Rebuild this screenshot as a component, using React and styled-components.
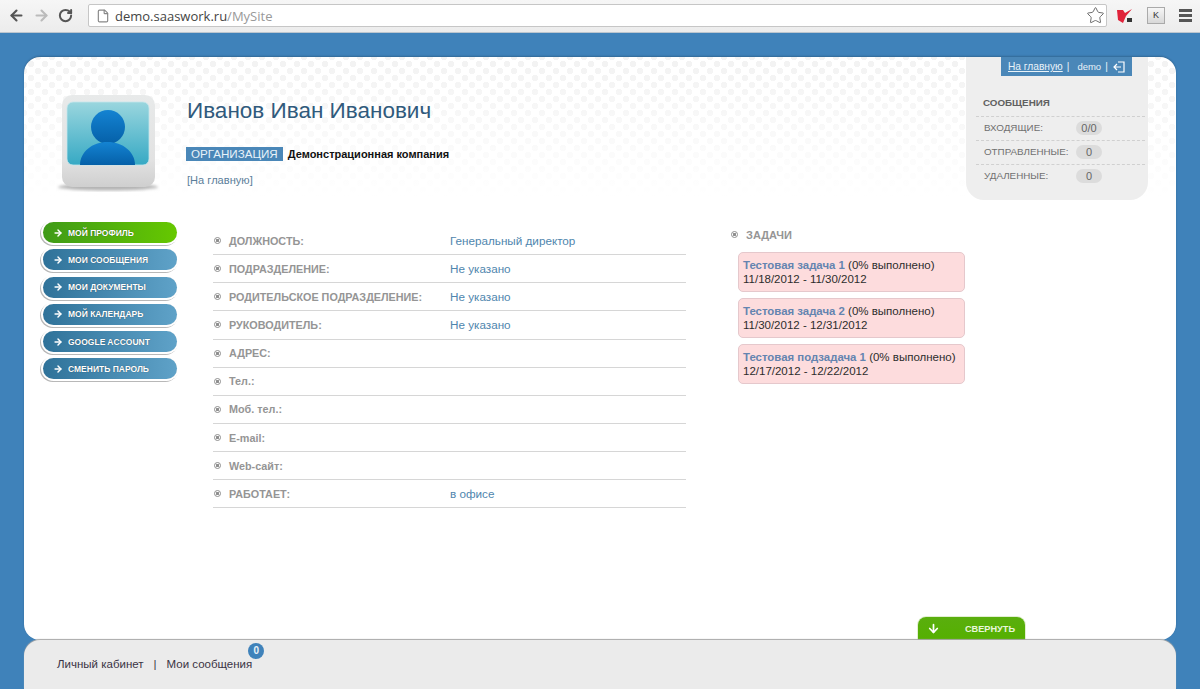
import React from 'react';
import styled, { createGlobalStyle } from 'styled-components';
import { ArrowLeft, ArrowRight, ArrowDown, RotateCw, File, Star } from 'lucide-react';

const menu = ['Мой профиль', 'Мои сообщения', 'Мои документы', 'Мой календарь', 'Google account', 'Сменить пароль'];

const fields = [
  { label: 'Должность:', value: 'Генеральный директор', upper: true },
  { label: 'Подразделение:', value: 'Не указано', upper: true },
  { label: 'Родительское подразделение:', value: 'Не указано', upper: true },
  { label: 'Руководитель:', value: 'Не указано', upper: true },
  { label: 'Адрес:', upper: true },
  { label: 'Тел.:' },
  { label: 'Моб. тел.:' },
  { label: 'E-mail:' },
  { label: 'Web-сайт:' },
  { label: 'Работает:', value: 'в офисе', upper: true },
];

const tasks = [
  { name: 'Тестовая задача 1', dates: '11/18/2012 - 11/30/2012' },
  { name: 'Тестовая задача 2', dates: '11/30/2012 - 12/31/2012' },
  { name: 'Тестовая подзадача 1', dates: '12/17/2012 - 12/22/2012' },
];

const messages = [
  { label: 'Входящие:', count: '0/0' },
  { label: 'Отправленные:', count: '0' },
  { label: 'Удаленные:', count: '0' },
];

const Avatar = () => (
  <AvatarSvg viewBox="0 0 104 100" width="104" height="100">
    <defs>
      <linearGradient id="frame" x1="0" y1="0" x2="0" y2="1">
        <stop offset="0" stopColor="#e8eaea" />
        <stop offset="0.7" stopColor="#e2e2e2" />
        <stop offset="1" stopColor="#cfcfcf" />
      </linearGradient>
      <linearGradient id="screen" x1="0" y1="0" x2="0" y2="1">
        <stop offset="0" stopColor="#9ad6de" />
        <stop offset="1" stopColor="#36a9c4" />
      </linearGradient>
      <linearGradient id="man" x1="0" y1="0" x2="0" y2="1">
        <stop offset="0" stopColor="#1483d2" />
        <stop offset="1" stopColor="#0560a8" />
      </linearGradient>
      <filter id="soft">
        <feGaussianBlur stdDeviation="1.5" />
      </filter>
    </defs>
    <ellipse cx="52" cy="92" rx="50" ry="3.5" fill="#b4b4b4" filter="url(#soft)" />
    <rect x="6" y="0" width="93" height="92" rx="10" fill="url(#frame)" />
    <rect x="11" y="7" width="82" height="63" rx="6" fill="url(#screen)" stroke="#c4e6ec" strokeWidth="0.8" />
    <circle cx="52" cy="32" r="17" fill="url(#man)" />
    <path d="M24 70c0-13 12-23 27.5-23S79 57 79 70z" fill="url(#man)" />
  </AvatarSvg>
);

const KasperskyIcon = () => (
  <svg viewBox="0 0 16 16" width="16" height="16">
    <path d="M0 2h6l2 3 7-4-6 7-3 7-5-3z" fill="#e0233a" />
    <rect x="10" y="10" width="5" height="4" fill="#333" />
  </svg>
);

const ExitIcon = () => (
  <svg viewBox="0 0 14 14" width="14" height="14" fill="none" stroke="#fff" strokeWidth="1.2">
    <path d="M6 2h6v10H6M9 7H2M5 4L2 7l3 3" />
  </svg>
);

export default function App() {
  return (
    <>
      <GlobalStyle />
      <Page>
        <BrowserBar>
          <NavIcons>
            <ArrowLeft size={17} strokeWidth={3} color="#555" />
            <ArrowRight size={17} strokeWidth={3} color="#bbb" />
            <RotateCw size={15} strokeWidth={3.2} color="#555" />
          </NavIcons>
          <Omnibox>
            <File size={14} color="#888" />
            <Url>demo.saaswork.ru<UrlPath>/MySite</UrlPath></Url>
            <Star size={19} strokeWidth={1.2} color="#666" />
          </Omnibox>
          <ExtIcons>
            <KasperskyIcon />
            <KeyBox>K</KeyBox>
            <Burger><i /><i /><i /></Burger>
          </ExtIcons>
        </BrowserBar>

        <Stage>
          <Panel>
            <Header>
              <Avatar />
              <Intro>
                <Name>Иванов Иван Иванович</Name>
                <OrgRow>
                  <OrgTag>Организация</OrgTag>
                  <OrgName>Демонстрационная компания</OrgName>
                </OrgRow>
                <HomeLink>[На главную]</HomeLink>
              </Intro>
              <MessagesBox>
                <UserBar>
                  <UserLink>На главную</UserLink>
                  <span>|</span>
                  <UserName>demo</UserName>
                  <span>|</span>
                  <ExitIcon />
                </UserBar>
                <MessagesTitle>Сообщения</MessagesTitle>
                {messages.map((m) => (
                  <MessageRow key={m.label}>
                    <MessageLabel>{m.label}</MessageLabel>
                    <Pill>{m.count}</Pill>
                  </MessageRow>
                ))}
              </MessagesBox>
            </Header>

            <Content>
              <SideMenu>
                {menu.map((item, i) => (
                  <MenuButton key={item} $active={i === 0}>
                    <ArrowRight size={10} strokeWidth={3.5} color="#fff" />
                    {item}
                  </MenuButton>
                ))}
              </SideMenu>

              <FieldList>
                {fields.map((f) => (
                  <FieldRow key={f.label}>
                    <Bullet />
                    <FieldLabel $upper={f.upper}>{f.label}</FieldLabel>
                    <FieldValue>{f.value}</FieldValue>
                  </FieldRow>
                ))}
              </FieldList>

              <Tasks>
                <TasksTitle><Bullet />Задачи</TasksTitle>
                {tasks.map((t) => (
                  <TaskCard key={t.name}>
                    <TaskName>{t.name}</TaskName> (0% выполнено)
                    <br />
                    {t.dates}
                  </TaskCard>
                ))}
              </Tasks>
            </Content>

            <CollapseTab>
              <ArrowDown size={13} strokeWidth={3.2} color="#fff" />
              <span>Свернуть</span>
            </CollapseTab>
          </Panel>

          <Footer>
            <FooterLink>Личный кабинет</FooterLink>
            <FooterSep>|</FooterSep>
            <FooterLink>
              Мои сообщения
              <Badge>0</Badge>
            </FooterLink>
          </Footer>
        </Stage>
      </Page>
    </>
  );
}

const GlobalStyle = createGlobalStyle`
  html, body {
    margin: 0;
    padding: 0;
    height: 100%;
    overflow: hidden;
    font-family: "Liberation Sans", Arial, sans-serif;
  }
  * {
    box-sizing: border-box;
  }
`;

const Page = styled.div`
  width: 1200px;
  height: 689px;
  display: flex;
  flex-direction: column;
  background: #3f82ba;
  overflow: hidden;
`;

const BrowserBar = styled.div`
  height: 33px;
  flex: none;
  display: flex;
  align-items: center;
  padding: 0 8px 1px 8px;
  background: linear-gradient(#f6f6f6, #ececec);
  border-bottom: 1px solid #bcc6cf;
`;

const NavIcons = styled.div`
  display: flex;
  align-items: center;
  gap: 8px;
  width: 80px;
  flex: none;
`;

const Omnibox = styled.div`
  width: 1019px;
  height: 23px;
  flex: none;
  display: flex;
  align-items: center;
  gap: 5px;
  padding: 0 1px 0 7px;
  background: #fff;
  border: 1px solid #c6c6c6;
  border-radius: 2px;
`;

const Url = styled.div`
  flex: 1;
  font: 13px "Open Sans", sans-serif;
  color: #444;
`;

const UrlPath = styled.span`
  color: #999;
`;

const ExtIcons = styled.div`
  display: flex;
  align-items: center;
  gap: 14px;
  margin-left: 10px;
`;

const KeyBox = styled.div`
  width: 18px;
  height: 17px;
  font-size: 9px;
  line-height: 15px;
  text-align: center;
  color: #333;
  background: linear-gradient(#f6f6f6, #d8d8d8);
  border: 1px solid #aaa;
`;

const Burger = styled.div`
  width: 13px;
  display: flex;
  flex-direction: column;
  gap: 2px;

  i {
    display: block;
    height: 3px;
    background: #555;
  }
`;

const Stage = styled.div`
  flex: 1;
  display: flex;
  flex-direction: column;
  padding: 24px 24px 0;
  min-height: 0;
`;

const Panel = styled.div`
  flex: 1;
  display: flex;
  flex-direction: column;
  border-radius: 16px;
  background:
    linear-gradient(rgba(255, 255, 255, 0.1), #fff 140px),
    radial-gradient(circle, #f1f1f1 3px, transparent 3.5px) 0 0 / 14px 14px,
    radial-gradient(circle, #f1f1f1 3px, transparent 3.5px) 7px 7px / 14px 14px,
    #fff;
  background-repeat: no-repeat, repeat, repeat;
  box-shadow: 0 -1px 2px rgba(0, 0, 0, 0.2);
`;

const Header = styled.div`
  height: 143px;
  flex: none;
  display: flex;
  padding: 0 28px 0 32px;
`;

const AvatarSvg = styled.svg`
  flex: none;
  margin-top: 38px;
`;

const Intro = styled.div`
  flex: 1;
  padding: 41px 0 0 27px;
`;

const Name = styled.h1`
  margin: 0;
  font-size: 22.5px;
  font-weight: 400;
  line-height: 26px;
  color: #305a7c;
`;

const OrgRow = styled.div`
  display: flex;
  align-items: center;
  gap: 5px;
  margin: 23px 0 0 -1px;
`;

const OrgTag = styled.span`
  height: 14px;
  padding: 0 5px;
  font-size: 11.6px;
  line-height: 14px;
  text-transform: uppercase;
  color: #e8f2f8;
  background: #4a87b8;
`;

const OrgName = styled.span`
  font-size: 11px;
  font-weight: 700;
  color: #111;
`;

const HomeLink = styled.a`
  display: block;
  margin-top: 13px;
  font-size: 11.1px;
  color: #5b7e9a;
`;

const MessagesBox = styled.div`
  width: 182px;
  height: 143px;
  flex: none;
  display: flex;
  flex-direction: column;
  padding: 0 3px 0 10px;
  background: #eeeeee;
  border-radius: 0 0 18px 18px;
`;

const UserBar = styled.div`
  align-self: flex-end;
  width: 131px;
  height: 19px;
  display: flex;
  align-items: center;
  gap: 4px;
  margin-right: 13px;
  padding: 0 6px 0 7px;
  font-size: 10.2px;
  color: #e8f2f8;
  background: #4a87b8;
`;

const UserLink = styled.a`
  text-decoration: underline;
`;

const UserName = styled.span`
  margin-left: 4px;
  font-size: 9.5px;
`;

const MessagesTitle = styled.div`
  margin: 21px 0 0 7px;
  height: 19px;
  font-size: 9.8px;
  font-weight: 700;
  line-height: 12px;
  text-transform: uppercase;
  color: #606060;
`;

const MessageRow = styled.div`
  height: 24px;
  display: flex;
  align-items: center;
  padding: 0 0 1px 8px;
  border-top: 1px dashed #d0d0d0;
`;

const MessageLabel = styled.span`
  width: 92px;
  padding-bottom: 1px;
  font-size: 9.8px;
  white-space: nowrap;
  text-transform: uppercase;
  color: #707070;
`;

const Pill = styled.span`
  width: 26px;
  height: 14px;
  font-size: 11px;
  line-height: 14px;
  text-align: center;
  color: #666;
  background: #dcdcdc;
  border-radius: 7px;
`;

const Content = styled.div`
  flex: 1;
  display: flex;
  align-items: flex-start;
  padding: 22px 0 0 19px;
`;

const SideMenu = styled.nav`
  width: 134px;
  flex: none;
  display: flex;
  flex-direction: column;
  gap: 6.3px;
`;

const MenuButton = styled.a`
  height: 21px;
  display: flex;
  align-items: center;
  gap: 5px;
  padding-left: 10px;
  font-size: 8.5px;
  font-weight: 700;
  text-transform: uppercase;
  color: #fff;
  text-shadow: 0 0 1px rgba(0, 0, 0, 0.5);
  background: ${(p) =>
    p.$active ? 'linear-gradient(90deg, #3f9a18, #66c800)' : 'linear-gradient(90deg, #2f7299, #5fa2c8)'};
  border-radius: 11px;
  box-shadow: 0 0 0 2px #fff, -1px 1px 0 2px #b8b8b8;
`;

const FieldList = styled.div`
  width: 473px;
  flex: none;
  margin: 5px 0 0 36px;
`;

const FieldRow = styled.div`
  height: 28.15px;
  display: flex;
  align-items: center;
  padding-left: 1px;
  border-bottom: 1px solid #d6d6d6;
`;

const Bullet = styled.span`
  flex: none;
  width: 7px;
  height: 7px;
  margin-right: 8px;
  border-radius: 50%;
  background: radial-gradient(circle, #8e8e8e 1.4px, #fff 1.6px);
  border: 1.4px solid #8e8e8e;
`;

const FieldLabel = styled.span`
  width: 221px;
  font-size: 10.8px;
  font-weight: 700;
  text-transform: ${(p) => (p.$upper ? 'uppercase' : 'none')};
  color: #959595;
`;

const FieldValue = styled.span`
  font-size: 11.7px;
  color: #4f86ae;
`;

const Tasks = styled.div`
  width: 240px;
  flex: none;
  margin-left: 45px;
`;

const TasksTitle = styled.div`
  height: 30px;
  display: flex;
  align-items: center;
  padding: 0 0 5px 0;
  font-size: 11px;
  font-weight: 700;
  text-transform: uppercase;
  color: #959595;
`;

const TaskCard = styled.div`
  width: 227px;
  height: 40px;
  margin: 0 0 6px 7px;
  padding: 5px 0 0 4px;
  font-size: 11.5px;
  line-height: 14px;
  white-space: nowrap;
  color: #2c2c2c;
  background: #fddcdd;
  border: 1px solid #e5c8cc;
  border-radius: 5px;
`;

const TaskName = styled.a`
  font-size: 11.4px;
  font-weight: 700;
  color: #6484b0;
`;

const CollapseTab = styled.div`
  align-self: flex-end;
  width: 107px;
  height: 23px;
  display: flex;
  align-items: center;
  justify-content: space-between;
  margin-right: 151px;
  padding: 0 10px 0 9px;
  font-size: 9.2px;
  font-weight: 700;
  text-transform: uppercase;
  color: #e9f6dc;
  background: linear-gradient(#5aae0e, #55b000);
  border-radius: 8px 8px 0 0;
  box-shadow: 0 0 0 1px #e2efd2;
`;

const Footer = styled.div`
  height: 49px;
  flex: none;
  display: flex;
  align-items: flex-start;
  padding: 18px 0 0 33px;
  font-size: 11.5px;
  color: #3a3344;
  background: #ebebeb;
  border-radius: 16px 16px 0 0;
  box-shadow: 0 -1px 1px #a8a8a8;
`;

const FooterLink = styled.a`
  position: relative;
`;

const FooterSep = styled.span`
  margin: 0 10px;
`;

const Badge = styled.span`
  position: absolute;
  top: -15px;
  right: -12px;
  width: 16px;
  height: 16px;
  font-size: 10px;
  font-weight: 700;
  line-height: 16px;
  text-align: center;
  color: #e8f2f8;
  background: #3f82ba;
  border-radius: 50%;
`;
